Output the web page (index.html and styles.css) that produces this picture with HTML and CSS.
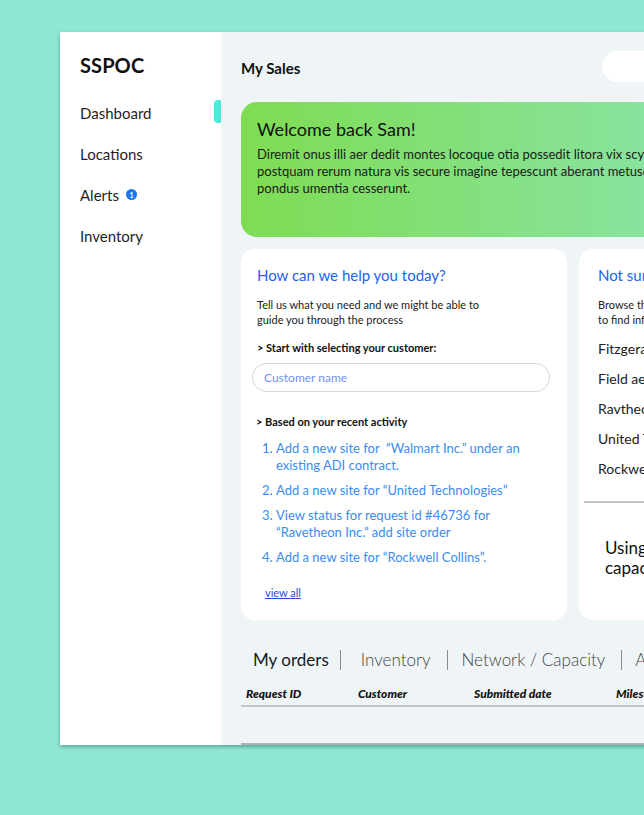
FILE: index.html
```html
<!DOCTYPE html>
<html lang="en">
<head>
<meta charset="utf-8">
<title>SSPOC - My Sales</title>
<link rel="stylesheet" href="styles.css">
</head>
<body>
<div class="frame">
  <aside class="sidebar">
    <div class="brand">SSPOC</div>
    <nav class="nav">
      <a class="nav-item active">Dashboard</a>
      <a class="nav-item">Locations</a>
      <a class="nav-item">Alerts <span class="badge">1</span></a>
      <a class="nav-item">Inventory</a>
    </nav>
  </aside>
  <main class="main">
    <header class="topbar">
      <h1 class="page-title">My Sales</h1>
      <div class="search-pill"></div>
    </header>
    <section class="banner">
      <h2 class="banner-title">Welcome back Sam!</h2>
      <p class="banner-text">Diremit onus illi aer dedit montes locoque otia possedit litora vix scythiam, quo cura<br>postquam rerum natura vis secure imagine tepescunt aberant metusque vertice<br>pondus umentia cesserunt.</p>
    </section>
    <div class="cards">
      <section class="card help-card">
        <h3 class="card-title">How can we help you today?</h3>
        <p class="card-desc">Tell us what you need and we might be able to<br>guide you through the process</p>
        <p class="label">&gt; Start with selecting your customer:</p>
        <div class="input">Customer name</div>
        <p class="label label-activity">&gt; Based on your recent activity</p>
        <ol class="activity">
          <li><span class="num">1.</span><span>Add a new site for &nbsp;“Walmart Inc.” under an existing ADI contract.</span></li>
          <li><span class="num">2.</span><span>Add a new site for “United Technologies”</span></li>
          <li><span class="num">3.</span><span>View status for request id #46736 for “Ravetheon Inc.” add site order</span></li>
          <li><span class="num">4.</span><span>Add a new site for “Rockwell Collins”.</span></li>
        </ol>
        <a class="view-all">view all</a>
      </section>
      <section class="card browse-card">
        <h3 class="card-title">Not sure where to start?</h3>
        <p class="card-desc">Browse through our list of top customers<br>to find information on orders and sites</p>
        <ul class="customers">
          <li>Fitzgerald Inc.</li>
          <li>Field aerospace</li>
          <li>Ravtheon Inc.</li>
          <li>United Technologies</li>
          <li>Rockwell Collins</li>
        </ul>
        <div class="divider"></div>
        <p class="using">Using network<br>capacity</p>
      </section>
    </div>
    <div class="tabs">
      <span class="tab tab-active">My orders</span>
      <span class="tab">Inventory</span>
      <span class="tab">Network / Capacity</span>
      <span class="tab">Alerts</span>
    </div>
    <div class="table">
      <div class="thead">
        <span class="th th-id">Request ID</span>
        <span class="th th-cust">Customer</span>
        <span class="th th-date">Submitted date</span>
        <span class="th">Milestone</span>
      </div>
      <div class="tbody"></div>
    </div>
  </main>
</div>
</body>
</html>
```

FILE: styles.css
```css
* { box-sizing: border-box; }
html, body { margin: 0; padding: 0; }
body {
  background: #90e8d4;
  font-family: Lato, "Noto Sans", sans-serif;
  color: #1d1d1f;
  overflow: hidden;
  height: 815px;
  width: 644px;
}
.frame {
  display: flex;
  margin: 32px 0 0 60px;
  width: 1000px;
  height: 713px;
  box-shadow: 0 2px 4px rgba(20, 90, 70, 0.45);
}
.sidebar {
  width: 161px;
  flex: none;
  background: #fff;
  padding-top: 20px;
}
.brand {
  padding-left: 20px;
  font-size: 20px;
  line-height: 26px;
  font-weight: 700;
  letter-spacing: 0.1px;
  color: #111;
}
.nav {
  display: flex;
  flex-direction: column;
  margin-top: 14px;
}
.nav-item {
  position: relative;
  display: flex;
  align-items: center;
  height: 41px;
  padding-left: 20px;
  font-size: 15px;
  color: #1f1f1f;
}
.nav-item.active::after {
  content: "";
  position: absolute;
  right: 0;
  top: 8px;
  width: 7px;
  height: 23px;
  background: #4ee8d8;
  border-radius: 4px 0 0 4px;
}
.badge {
  display: inline-flex;
  align-items: center;
  justify-content: center;
  width: 11px;
  height: 11px;
  margin-left: 7px;
  border-radius: 50%;
  background: #1877f2;
  color: #fff;
  font-size: 7px;
  font-weight: 700;
}
.main {
  flex: 1;
  background: #eff4f6;
  padding: 0 20px;
  display: flex;
  flex-direction: column;
}
.topbar {
  display: grid;
  grid-template-columns: 361px 200px;
  align-items: center;
  height: 70px;
  padding-top: 2px;
}
.page-title {
  margin: 0;
  font-size: 15px;
  font-weight: 700;
  color: #111;
}
.search-pill {
  width: 200px;
  height: 31px;
  border-radius: 16px;
  background: #fff;
  margin-top: -3px;
}
.banner {
  height: 135px;
  border-radius: 16px;
  background: linear-gradient(90deg, #7edc52 0%, #88e39d 50%, #8fe7c8 100%);
  padding: 15px 16px;
  overflow: hidden;
}
.banner-title {
  margin: 0;
  font-size: 18px;
  line-height: 24px;
  font-weight: 400;
  color: #111;
}
.banner-text {
  margin: 5px 0 0;
  font-size: 13px;
  line-height: 17px;
  white-space: nowrap;
  color: #1a1a1a;
}
.cards {
  display: flex;
  gap: 12px;
  margin-top: 12px;
}
.card {
  background: #fff;
  border-radius: 14px;
  height: 371px;
  flex: none;
}
.help-card {
  width: 326px;
  padding: 16px 16px 0;
}
.browse-card {
  width: 326px;
  padding: 16px 19px 0 19px;
}
.card-title {
  margin: 0;
  font-size: 15px;
  line-height: 20px;
  font-weight: 400;
  color: #1c63f2;
}
.card-desc {
  margin: 12px 0 0;
  font-size: 11px;
  line-height: 15px;
  color: #222;
}
.label {
  margin: 13px 0 0;
  font-size: 11px;
  line-height: 15px;
  font-weight: 700;
  color: #111;
}
.label-activity { margin-top: 22px; margin-left: -1px; }
.input {
  margin: 8px 0 0 -5px;
  width: 298px;
  height: 29px;
  border: 1px solid #d3d6d8;
  border-radius: 15px;
  padding-left: 11px;
  display: flex;
  align-items: center;
  font-size: 12px;
  color: #6f92f4;
}
.activity {
  list-style: none;
  margin: 11px 0 0;
  padding: 0 0 0 5px;
  display: flex;
  flex-direction: column;
  gap: 8px;
}
.activity li {
  display: flex;
  font-size: 13px;
  line-height: 17px;
  color: #3a8cf0;
  padding-right: 20px;
}
.activity .num { width: 14px; flex: none; }
.view-all {
  display: inline-block;
  margin: 19px 0 0 8px;
  font-size: 11px;
  line-height: 15px;
  color: #1f4fd0;
  text-decoration: underline;
}
.customers {
  list-style: none;
  margin: 12px 0 0;
  padding: 0;
  display: flex;
  flex-direction: column;
  gap: 10px;
}
.customers li {
  font-size: 14px;
  line-height: 20px;
  color: #222;
}
.divider {
  margin: 22px -19px 0 -14px;
  height: 2px;
  background: #bfc3c5;
}
.using {
  margin: 35px 0 0 7px;
  font-size: 17px;
  line-height: 20px;
  color: #111;
}
.tabs {
  display: flex;
  align-items: center;
  margin-top: 29px;
  height: 22px;
}
.tab {
  font-size: 17px;
  font-weight: 300;
  color: #444;
  padding: 0 14px;
  border-left: 1px solid #8a8a8a;
  line-height: 20px;
}
.tab-active {
  border-left: none;
  padding: 0 11px 0 12px;
  font-weight: 400;
  color: #1a1a1a;
}
.tab:nth-child(2) { padding-left: 20px; padding-right: 16px; }
.tab:nth-child(3) { padding-left: 14px; padding-right: 16px; }
.tab:nth-child(4) { padding-left: 13px; }
.table {
  flex: 1;
  display: flex;
  flex-direction: column;
  margin-top: 13px;
}
.thead {
  display: flex;
  align-items: center;
  height: 18px;
  padding-left: 5px;
  border-bottom: 2px solid #c3c7c9;
  padding-bottom: 3px;
  box-sizing: content-box;
}
.th {
  font-size: 12px;
  font-style: italic;
  font-weight: 900;
  color: #111;
}
.th-id { width: 112px; }
.th-cust { width: 116px; }
.th-date { width: 142px; }
.tbody {
  flex: 1;
  border-bottom: 2px solid #a9b5b3;
}
```
